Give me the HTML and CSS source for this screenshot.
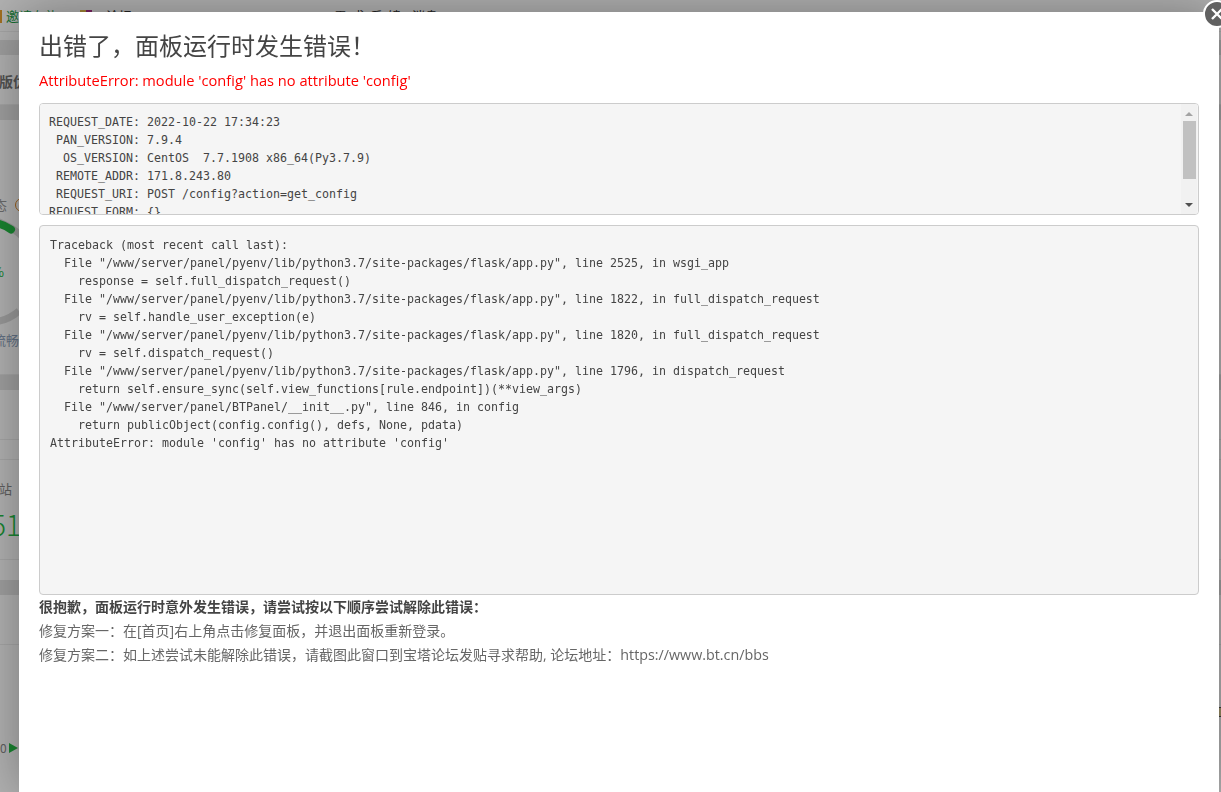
FILE: index.html
```html
<!DOCTYPE html>
<html lang="zh-CN">
<head>
<meta charset="utf-8">
<title>面板错误</title>
<link rel="stylesheet" href="styles.css">
</head>
<body>
<div class="page">
  <div class="topbar">
    <span class="flag"></span><span class="invite">邀请有礼</span>
    <span class="gift"></span><span class="nav nav-a">论坛</span>
    <span class="nav nav-b">需求反馈</span><span class="nav nav-c">消息</span>
  </div>
  <div class="gap g1"></div>
  <div class="band b1"></div>
  <div class="row r1"><b class="edition">版优势</b></div>
  <div class="band b2"></div>
  <div class="row r2">
    <span class="status">态</span><span class="ring"></span>
    <svg class="gauge" width="60" height="150" viewBox="0 0 60 150">
      <path class="arc-base" d="M-6 10 C 12 16 24 26 32 38"/>
      <path class="arc-base" d="M-6 112 C 4 111 12 107 19 101"/>
      <path class="arc-fill" d="M-6 13 C 0 13.5 6 16 11 19.5"/>
    </svg>
    <span class="pct">%</span>
    <span class="smooth">流畅</span>
  </div>
  <div class="band b3"></div>
  <div class="row r3"></div>
  <div class="row r3b"></div>
  <div class="row r4"><span class="site">网站</span><span class="count">51</span></div>
  <div class="gap g2"></div>
  <div class="band b4"></div>
  <div class="row r5"></div>
  <div class="row r6"><span class="zero">0</span><span class="play"></span><span class="edge-mark"></span></div>
</div>
<div class="shade"></div>
<section class="modal">
  <button class="close" aria-label="关闭"><svg width="14" height="14" viewBox="0 0 14 14"><path d="M2 2 12 12M12 2 2 12"/></svg></button>
  <h1 class="title">出错了，面板运行时发生错误！</h1>
  <p class="error">AttributeError: module 'config' has no attribute 'config'</p>
  <div class="request">
    <pre class="code">REQUEST_DATE: 2022-10-22 17:34:23
 PAN_VERSION: 7.9.4
  OS_VERSION: CentOS  7.7.1908 x86_64(Py3.7.9)
 REMOTE_ADDR: 171.8.243.80
 REQUEST_URI: POST /config?action=get_config
REQUEST_FORM: {}</pre>
    <div class="scrollbar"><span class="arrow up"></span><span class="thumb"></span><span class="arrow down"></span></div>
  </div>
  <pre class="code trace">Traceback (most recent call last):
  File "/www/server/panel/pyenv/lib/python3.7/site-packages/flask/app.py", line 2525, in wsgi_app
    response = self.full_dispatch_request()
  File "/www/server/panel/pyenv/lib/python3.7/site-packages/flask/app.py", line 1822, in full_dispatch_request
    rv = self.handle_user_exception(e)
  File "/www/server/panel/pyenv/lib/python3.7/site-packages/flask/app.py", line 1820, in full_dispatch_request
    rv = self.dispatch_request()
  File "/www/server/panel/pyenv/lib/python3.7/site-packages/flask/app.py", line 1796, in dispatch_request
    return self.ensure_sync(self.view_functions[rule.endpoint])(**view_args)
  File "/www/server/panel/BTPanel/__init__.py", line 846, in config
    return publicObject(config.config(), defs, None, pdata)
AttributeError: module 'config' has no attribute 'config'</pre>
  <div class="help">
    <p class="help-lead">很抱歉，面板运行时意外发生错误，请尝试按以下顺序尝试解除此错误：</p>
    <p>修复方案一：在[首页]右上角点击修复面板，并退出面板重新登录。</p>
    <p>修复方案二：如上述尝试未能解除此错误，请截图此窗口到宝塔论坛发贴寻求帮助, 论坛地址：<span class="url">https://www.bt.cn/bbs</span></p>
  </div>
</section>
</body>
</html>
```
FILE: styles.css
```css
* { box-sizing: border-box; }
html, body { margin: 0; height: 100%; overflow: hidden; background: #fff; }
body { font-family: "Open Sans", "Noto Sans CJK SC", sans-serif; }

.page { display: flex; flex-direction: column; height: 792px; overflow: hidden; font-family: "Noto Sans CJK SC", sans-serif; background: #fff; }
.topbar { height: 32px; flex: none; background: #fff; display: flex; align-items: flex-start; padding-top: 7px; font-size: 13px; line-height: 18px; border-bottom: 1px solid #eee; }
.flag { width: 2px; height: 13px; margin-top: 3px; background: #e8a030; }
.invite { margin-left: 4px; color: #1e9e4a; }
.gift { width: 12px; height: 13px; margin: 3px 0 0 22px; background: linear-gradient(90deg, #e8c050 50%, #b0308a 50%); }
.nav { color: #333; }
.nav-a { margin-left: 14px; }
.nav-b { margin-left: 202px; letter-spacing: 5px; }
.nav-c { margin-left: 6px; }
.gap { flex: none; }
.g1 { height: 8px; }
.g2 { height: 20px; }
.band { flex: none; height: 15px; background: #e6e6e6; }
.row { flex: none; position: relative; border-bottom: 1px solid #eee; }
.r1 { height: 50px; padding-top: 16px; font-size: 14px; line-height: 20px; color: #777; }
.edition { margin-left: -1px; }
.r2 { height: 255px; }
.status { position: absolute; left: -6px; top: 76px; font-size: 13px; line-height: 18px; color: #999; }
.ring { position: absolute; left: 15px; top: 78px; width: 14px; height: 14px; border: 1px solid #e08a2a; border-radius: 50%; }
.gauge { position: absolute; left: 0; top: 90px; }
.arc-base { fill: none; stroke: #dcdcdc; stroke-width: 7; }
.arc-fill { fill: none; stroke: #24bd45; stroke-width: 8; stroke-linecap: round; }
.pct { position: absolute; left: -8px; top: 143px; font-size: 13px; line-height: 18px; color: #24bd45; }
.smooth { position: absolute; left: -7px; top: 211px; font-size: 13px; line-height: 18px; color: #8fa3bd; }
.r3 { height: 50px; }
.r3b { height: 20px; }
.r4 { height: 100px; }
.site { position: absolute; left: -14px; top: 20px; font-size: 13px; line-height: 18px; color: #888; }
.count { position: absolute; left: -9px; top: 47px; font-size: 28px; line-height: 34px; font-weight: 300; color: #24bd45; }
.r5 { height: 50px; }
.r6 { height: 147px; border-bottom: 0; }
.zero { position: absolute; left: 0; top: 94px; font-size: 12px; line-height: 18px; color: #888; }
.play { position: absolute; left: 9px; top: 98px; width: 0; height: 0; border-left: 9px solid #24bd45; border-top: 5.5px solid transparent; border-bottom: 5.5px solid transparent; }
.edge-mark { position: absolute; right: 0; top: 62px; width: 2px; height: 10px; background: #d8c890; border: solid #555; border-width: 1px 0; }

.shade { position: fixed; inset: 0; background: rgba(0, 0, 0, .3); }
.modal { position: absolute; left: 19px; top: 12px; width: 1200px; height: 780px; padding: 0 20px; background: #fff; box-shadow: 1px 1px 50px rgba(0, 0, 0, .35); }
.close { position: absolute; right: -12px; top: -12px; width: 28px; height: 28px; padding: 0; display: flex; align-items: center; justify-content: center; background: #616161; border: 2px solid #fff; border-radius: 50%; }
.close svg { display: block; }
.close path { fill: none; stroke: #fff; stroke-width: 2.4; }

.title { margin: 0; padding-top: 16px; font-size: 24px; line-height: 34px; font-weight: 400; color: #444; font-family: "Noto Sans CJK SC", sans-serif; }
.error { margin: 7px 0 0; font-size: 14.65px; line-height: 22px; color: #f00; }
.request { position: relative; margin-top: 12px; height: 112px; overflow: hidden; background: #f5f5f5; border: 1px solid #ccc; border-radius: 4px; }
.code { margin: 0; padding: 9px; font-family: "DejaVu Sans Mono", monospace; font-size: 11.63px; line-height: 18px; color: #444; background: #f5f5f5; }
.trace { height: 370px; margin-top: 10px; padding: 9.5px 10px; border: 1px solid #ccc; border-radius: 4px; overflow: hidden; }
.scrollbar { position: absolute; right: 1px; top: 0; bottom: 0; width: 16px; display: flex; flex-direction: column; align-items: center; background: #f1f1f1; }
.arrow { flex: none; width: 0; height: 0; border-left: 4px solid transparent; border-right: 4px solid transparent; }
.arrow.up { margin-top: 8px; border-bottom: 4px solid #a3a3a3; }
.arrow.down { margin-top: 24px; border-top: 4px solid #505050; }
.thumb { flex: none; width: 13px; height: 58px; margin-top: 5px; background: #c1c1c1; }
.help { font-size: 14px; line-height: 24px; color: #666; }
.help p { margin: 0; }
.help-lead { font-weight: 700; color: #444; }
.url { font-size: 14.3px; }
```
